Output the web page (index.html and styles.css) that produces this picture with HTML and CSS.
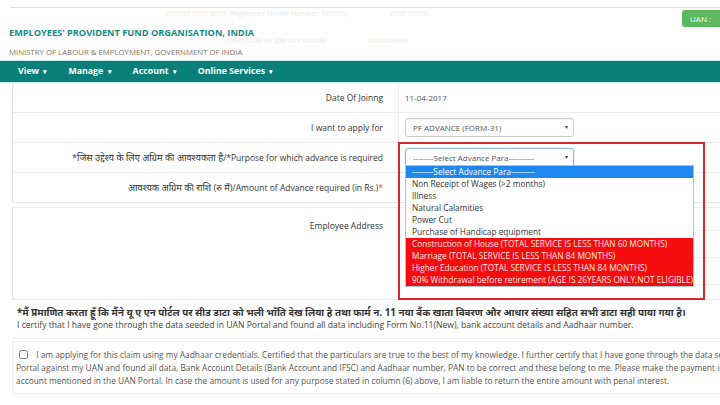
FILE: index.html
```html
<!DOCTYPE html>
<html lang="en">
<head>
    <meta charset="UTF-8">
    <meta name="viewport" content="width=device-width, initial-scale=1.0">
    <title>Member Claim - EPFO</title>
    <link rel="stylesheet" href="styles.css">
</head>
<body>
    <div class="page">
    <div class="topline"></div>
    <header class="masthead">
        <div class="brand">
            <div class="org">EMPLOYEES' PROVIDENT FUND ORGANISATION, INDIA</div>
            <div class="ministry">MINISTRY OF LABOUR &amp; EMPLOYMENT, GOVERNMENT OF INDIA</div>
        </div>
        <div class="member">
            <div>XXXXXX XXXX XXXX (Registered Mobile Number: XXXXXX) <span class="gap">XXXX XXXXX</span></div>
            <div class="second">XXXXXXXXX XX XXX XXX XXXXXX <span class="gap">XXXXXXXXXX</span></div>
        </div>
        <span class="uan">UAN :</span>
    </header>

    <nav class="menu">
        <a href="#">View <span class="caret">&#9662;</span></a>
        <a href="#">Manage <span class="caret">&#9662;</span></a>
        <a href="#">Account <span class="caret">&#9662;</span></a>
        <a href="#">Online Services <span class="caret">&#9662;</span></a>
    </nav>

    <form class="claim">
        <div class="panel">
            <div class="row">
                <label>Date Of Joinng</label>
                <div class="val">11-04-2017</div>
            </div>
            <div class="row">
                <label>I want to apply for</label>
                <div class="val"><div class="select">PF ADVANCE (FORM-31)<span class="arrow">&#9662;</span></div></div>
            </div>
            <div class="row">
                <label><span class="hi">*जिस उद्देश्य के लिए अग्रिम की आवश्यकता है</span>/*Purpose for which advance is required</label>
                <div class="val dropwrap">
                    <div class="select focus">--------Select Advance Para----------<span class="arrow">&#9662;</span></div>
                    <ul class="options">
                        <li class="picked">--------Select Advance Para---------</li>
                        <li>Non Receipt of Wages (&gt;2 months)</li>
                        <li>Illness</li>
                        <li>Natural Calamities</li>
                        <li>Power Cut</li>
                        <li>Purchase of Handicap equipment</li>
                        <li class="blocked">Construction of House (TOTAL SERVICE IS LESS THAN 60 MONTHS)</li>
                        <li class="blocked">Marriage (TOTAL SERVICE IS LESS THAN 84 MONTHS)</li>
                        <li class="blocked">Higher Education (TOTAL SERVICE IS LESS THAN 84 MONTHS)</li>
                        <li class="blocked">90% Withdrawal before retirement (AGE IS 26YEARS ONLY,NOT ELIGIBLE)</li>
                    </ul>
                </div>
            </div>
            <div class="row">
                <label><span class="hi">आवश्यक अग्रिम की राशि (रु में)</span>/Amount of Advance required (in Rs.)<span class="req">*</span></label>
                <div class="val"></div>
            </div>
        </div>

        <div class="panel address">
            <div class="row tall">
                <label>Employee Address</label>
                <div class="val">
                    <div class="field"></div>
                    <div class="field"></div>
                    <div class="field"></div>
                </div>
            </div>
        </div>

        <div class="declare">
            <p class="hindi">*मैं प्रमाणित करता हूँ कि मैंने यू ए एन पोर्टल पर सीड डाटा को भली भाँति देख लिया है तथा फार्म न. 11 नया बैंक खाता विवरण और आधार संख्या सहित सभी डाटा सही पाया गया है।</p>
            <p>I certify that I have gone through the data seeded in UAN Portal and found all data including Form No.11(New), bank account details and Aadhaar number.</p>
        </div>

        <div class="consent">
            <p><input type="checkbox" class="check"> I am applying for this claim using my Aadhaar credentials. Certified that the particulars are true to the best of my knowledge. I further certify that I have gone through the data seeded in UAN<br>
            Portal against my UAN and found all data, Bank Account Details (Bank Account and IFSC) and Aadhaar number, PAN to be correct and these belong to me. Please make the payment in my<br>
            account mentioned in the UAN Portal. In case the amount is used for any purpose stated in column (6) above, I am liable to return the entire amount with penal interest.</p>
        </div>
    </form>

    <div class="highlight"></div>
    </div>
</body>
</html>
```

FILE: styles.css
```css
html, body {
    margin: 0;
    overflow: hidden;
    background: #fff;
}
body {
    font-family: "Open Sans", "Noto Sans", sans-serif;
    color: #333;
}
.page {
    position: relative;
    width: 740px;
    height: 398px;
    padding-top: 7px;
}
.topline {
    margin-left: 10px;
    border-top: 1px solid #dcdcdc;
}
.masthead {
    display: grid;
    grid-template-columns: 1fr auto;
    height: 52px;
}
.brand, .member { grid-area: 1 / 1; }
.brand { padding: 19px 0 0 9px; }
.org {
    font-size: 9.2px;
    font-weight: bold;
    color: #178a86;
    line-height: 12px;
}
.ministry {
    margin-top: 8px;
    font-size: 7.8px;
    color: #7e7468;
    line-height: 10px;
}
.member {
    padding: 1px 0 0 166px;
    font-size: 7px;
    color: #e8e8e8;
    line-height: 10px;
}
.member .second {
    margin-top: 17px;
    padding-left: 60px;
}
.member .gap { margin-left: 40px; }
.uan {
    grid-area: 1 / 2;
    align-self: start;
    margin-top: 2px;
    width: 50px;
    height: 17px;
    padding-left: 8px;
    line-height: 17px;
    font-size: 8px;
    color: #fff;
    background: #5cb85c;
    border-radius: 3px 0 0 3px;
}
.menu {
    display: flex;
    gap: 21px;
    height: 21px;
    padding-left: 18px;
    background: #0a7f7a;
    border-top: 1px solid #c8ecec;
    border-bottom: 1px solid #c8ecec;
}
.menu a {
    color: #fff;
    text-decoration: none;
    font-size: 8.8px;
    font-weight: bold;
    line-height: 21px;
}
.menu .caret { font-size: 6.5px; margin-left: 2px; }

.panel {
    margin-left: 12px;
    border-left: 1px solid #e2e2e2;
    border-bottom: 1px solid #e8e8e8;
}
.row {
    display: flex;
    height: 29px;
    border-top: 1px solid #eee;
}
.row:first-child { border-top: none; }
.row label {
    width: 370px;
    padding-right: 15px;
    text-align: right;
    font-size: 8.5px;
    line-height: 29px;
    color: #333;
    white-space: nowrap;
}
.row .hi { font-size: 9.3px; }
.req { color: #d9534f; }
.val {
    flex: 1;
    display: flex;
    align-items: center;
    padding-left: 6px;
    border-left: 1px solid #eee;
    font-size: 8px;
    color: #555;
}
.select {
    position: relative;
    width: 160px;
    height: 17px;
    padding-left: 7px;
    line-height: 17px;
    font-size: 8px;
    color: #555;
    border: 1px solid #ccc;
    border-radius: 3px;
    box-shadow: inset 0 1px 1px rgba(0,0,0,.05);
}
.select.focus {
    border-color: #8fb8e0;
    box-shadow: 0 0 2px rgba(102,175,233,.6);
}
.arrow {
    position: absolute;
    right: 5px;
    top: 0;
    font-size: 6px;
    color: #444;
}
.dropwrap { position: relative; }
.options {
    position: absolute;
    left: 6px;
    top: 22px;
    z-index: 2;
    width: 287px;
    margin: 0;
    padding: 0;
    list-style: none;
    background: #fff;
    border: 1px solid #a8c4d4;
}
.options li {
    height: 12px;
    padding-left: 6px;
    line-height: 12px;
    font-size: 8.3px;
    color: #333;
    white-space: nowrap;
}
.options .picked {
    background: #1e88f0;
    color: #fff;
}
.options .blocked {
    background: #f50d0d;
    color: #ffe6e6;
}

.address { margin-top: 4px; border-top: 1px solid #eee; }
.row.tall { height: 91px; border-top: none; }
.tall label { line-height: 12px; padding-top: 12px; }
.tall .val {
    flex-direction: column;
    align-items: stretch;
    justify-content: flex-start;
    gap: 10px;
    padding: 6px 0 0 7px;
}
.field {
    height: 16px;
    border-bottom: 1px solid #eee;
}

.declare {
    margin-left: 12px;
    padding: 6px 0 6px 5px;
    border-bottom: 1px solid #eee;
}
.declare p {
    margin: 0;
    font-size: 8.6px;
    line-height: 13px;
    color: #444;
    white-space: nowrap;
}
.declare .hindi {
    font-size: 9.8px;
    font-weight: bold;
    color: #333;
}
.consent {
    margin: 2px 0 0 12px;
    padding: 6px 0 6px 3px;
    border-top: 1px solid #eee;
    border-bottom: 1px solid #eee;
    border-left: 1px solid #eee;
}
.consent p {
    margin: 0;
    font-size: 8.35px;
    line-height: 13px;
    color: #555;
    white-space: nowrap;
}
.check {
    width: 9px;
    height: 9px;
    margin: 0 6px 0 3px;
    vertical-align: -1px;
}
.highlight {
    position: absolute;
    left: 398px;
    top: 142px;
    width: 303px;
    height: 154px;
    border: 2px solid #d7262d;
}
```
